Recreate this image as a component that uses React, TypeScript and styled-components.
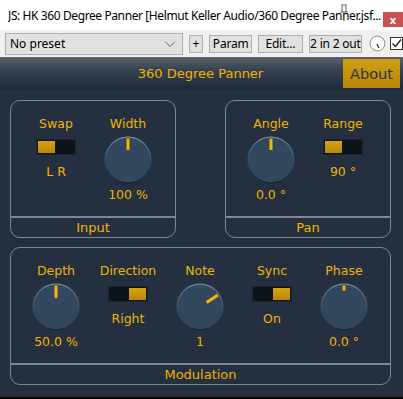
import React from 'react';
import styled, { createGlobalStyle } from 'styled-components';

const GlobalStyle = createGlobalStyle`
  html, body {
    margin: 0;
    padding: 0;
    background: #ffffff;
    overflow: hidden;
  }
`;

const GOLD = '#f2b300';
const PLUGIN_FONT = `'DejaVu Sans', Verdana, sans-serif`;
const WIN_FONT = `'Noto Sans', 'Open Sans', Arial, sans-serif`;

type KnobProps = { angle: number; inner?: number };

const Knob: React.FC<KnobProps> = ({ angle, inner = 10 }) => {
  const rad = (angle * Math.PI) / 180;
  const x1 = 24 + Math.sin(rad) * inner;
  const y1 = 24 - Math.cos(rad) * inner;
  const x2 = 24 + Math.sin(rad) * 21.5;
  const y2 = 24 - Math.cos(rad) * 21.5;
  return (
    <KnobSvg width="48" height="48" viewBox="0 0 48 48">
      <defs>
        <linearGradient id="rim" x1="0" y1="0" x2="0" y2="1">
          <stop offset="0" stopColor="#8596a8" />
          <stop offset="0.5" stopColor="#3b4f66" />
          <stop offset="1" stopColor="#141c26" />
        </linearGradient>
      </defs>
      <circle cx="24" cy="24" r="23.5" fill="url(#rim)" />
      <circle cx="24" cy="24" r="22.5" fill="#33485f" />
      <line x1={x1} y1={y1} x2={x2} y2={y2} stroke="#f5b800" strokeWidth="3" />
    </KnobSvg>
  );
};

const Toggle: React.FC<{ right?: boolean }> = ({ right }) => (
  <ToggleTrack>
    <ToggleThumb $right={right} />
  </ToggleTrack>
);

const KnobControl: React.FC<{ label: string; value: string; angle: number; inner?: number }> = ({ label, value, angle, inner }) => (
  <Control>
    <CtrlLabel>{label}</CtrlLabel>
    <Knob angle={angle} inner={inner} />
    <KnobValue>{value}</KnobValue>
  </Control>
);

const ToggleControl: React.FC<{ label: string; value: string; right?: boolean }> = ({ label, value, right }) => (
  <Control>
    <CtrlLabel>{label}</CtrlLabel>
    <Toggle right={right} />
    <ToggleValue>{value}</ToggleValue>
  </Control>
);

const App: React.FC = () => {
  return (
    <>
      <GlobalStyle />
      <Window>
        <TitleBar>
          <TitleText>JS: HK 360 Degree Panner [Helmut Keller Audio/360 Degree Panner.jsf...</TitleText>
          <Pin width="10" height="18" viewBox="0 0 10 18">
            <path d="M2 1h6M3 1v7M7 1v7M1 8h8M5 8v9" stroke="#666" strokeWidth="1" fill="none" />
          </Pin>
          <CloseButton>x</CloseButton>
        </TitleBar>
        <Toolbar>
          <PresetSelect>
            <span>No preset</span>
            <svg width="12" height="8" viewBox="0 0 12 8">
              <path d="M1 1.5l5 5 5-5" stroke="#666" strokeWidth="1" fill="none" />
            </svg>
          </PresetSelect>
          <ToolButton $w={15}>+</ToolButton>
          <ToolButton $w={43}>Param</ToolButton>
          <ToolButton $w={45}>Edit...</ToolButton>
          <ToolButton $w={54}>2 in 2 out</ToolButton>
          <svg width="17" height="17" viewBox="0 0 17 17" style={{ marginLeft: 2 }}>
            <circle cx="8.5" cy="8.5" r="7.5" fill="#fff" stroke="#888" strokeWidth="1" />
            <path d="M8 9l2 4" stroke="#333" strokeWidth="1.3" />
          </svg>
          <CheckBox>
            <svg width="11" height="11" viewBox="0 0 11 11">
              <path d="M1.5 5.5l3 3 5.5-7" stroke="#222" strokeWidth="1.4" fill="none" />
            </svg>
          </CheckBox>
        </Toolbar>
        <Header>
          <HeaderTitle>360 Degree Panner</HeaderTitle>
          <AboutButton>About</AboutButton>
        </Header>
        <Main>
          <TopRow>
            <Panel $w={166}>
              <Controls>
                <ToggleControl label="Swap" value="L R" />
                <KnobControl label="Width" value="100 %" angle={0} />
              </Controls>
              <PanelFooter>Input</PanelFooter>
            </Panel>
            <Panel $w={166}>
              <Controls>
                <KnobControl label="Angle" value="0.0 °" angle={0} />
                <ToggleControl label="Range" value="90 °" />
              </Controls>
              <PanelFooter>Pan</PanelFooter>
            </Panel>
          </TopRow>
          <Panel $w={381}>
            <Controls>
              <KnobControl label="Depth" value="50.0 %" angle={0} inner={9} />
              <ToggleControl label="Direction" value="Right" right />
              <KnobControl label="Note" value="1" angle={56} inner={8} />
              <ToggleControl label="Sync" value="On" right />
              <KnobControl label="Phase" value="0.0 °" angle={0} inner={16.5} />
            </Controls>
            <PanelFooter>Modulation</PanelFooter>
          </Panel>
        </Main>
        <BottomEdge />
      </Window>
    </>
  );
};

export default App;

const Window = styled.div`
  width: 403px;
  height: 399px;
  display: flex;
  flex-direction: column;
  background: #ffffff;
`;

const TitleBar = styled.div`
  position: relative;
  height: 30px;
  display: flex;
  align-items: center;
  padding-left: 8px;
  background: #ffffff;
`;

const TitleText = styled.div`
  width: 374px;
  overflow: hidden;
  font-family: ${WIN_FONT};
  font-size: 12px;
  color: #000;
  white-space: nowrap;
  letter-spacing: -0.4px;
`;

const Pin = styled.svg`
  position: absolute;
  left: 339px;
  top: 4px;
`;

const CloseButton = styled.div`
  position: absolute;
  right: 0;
  top: 12px;
  width: 20px;
  height: 15px;
  background: #c75050;
  color: #fff;
  font-family: ${WIN_FONT};
  font-size: 11px;
  font-weight: bold;
  display: flex;
  align-items: center;
  justify-content: center;
  line-height: 1;
`;

const Toolbar = styled.div`
  height: 27px;
  background: #f0f0f0;
  display: flex;
  align-items: center;
  padding-left: 5px;
  gap: 5px;
`;

const PresetSelect = styled.div`
  box-sizing: border-box;
  width: 179px;
  height: 22px;
  border: 1px solid #adadad;
  background: #e1e1e1;
  display: flex;
  align-items: center;
  justify-content: space-between;
  padding: 0 6px 0 4px;
  font-family: ${WIN_FONT};
  font-size: 12px;
  color: #000;
`;

const ToolButton = styled.div<{ $w: number }>`
  box-sizing: border-box;
  width: ${({ $w }) => $w}px;
  height: 18px;
  border: 1px solid #adadad;
  background: #e1e1e1;
  display: flex;
  align-items: center;
  justify-content: center;
  font-family: ${WIN_FONT};
  font-size: 12px;
  letter-spacing: -0.2px;
  color: #000;
  white-space: nowrap;
  margin-left: 1px;
`;

const CheckBox = styled.div`
  box-sizing: border-box;
  width: 13px;
  height: 13px;
  border: 1px solid #333;
  background: #fff;
  display: flex;
  align-items: center;
  justify-content: center;
  margin-left: -1px;
`;

const Header = styled.div`
  position: relative;
  height: 33px;
  background: linear-gradient(#59636f 0%, #3a4553 35%, #1d2836 100%);
  display: flex;
  align-items: center;
  justify-content: center;
`;

const HeaderTitle = styled.div`
  font-family: ${PLUGIN_FONT};
  font-size: 13px;
  color: ${GOLD};
  margin-right: 2px;
`;

const AboutButton = styled.div`
  position: absolute;
  right: 3px;
  top: 2px;
  width: 57px;
  height: 29px;
  background: linear-gradient(#d29e12, #b8860a);
  color: #2a3340;
  font-family: ${PLUGIN_FONT};
  font-size: 14.5px;
  display: flex;
  align-items: center;
  justify-content: center;
`;

const Main = styled.div`
  flex: 1;
  background: #243040;
  padding: 10px 12px 0 10px;
  display: flex;
  flex-direction: column;
  gap: 9px;
`;

const TopRow = styled.div`
  display: flex;
  justify-content: space-between;
`;

const Panel = styled.div<{ $w: number }>`
  box-sizing: border-box;
  width: ${({ $w }) => $w}px;
  height: 138px;
  border: 1px solid #80868e;
  border-radius: 10px;
  display: flex;
  flex-direction: column;
`;

const Controls = styled.div`
  flex: 1;
  display: flex;
  padding: 15px 0 0 9px;
`;

const Control = styled.div`
  width: 72px;
  display: flex;
  flex-direction: column;
  align-items: center;
`;

const CtrlLabel = styled.div`
  font-family: ${PLUGIN_FONT};
  font-size: 12.5px;
  line-height: 16px;
  color: ${GOLD};
  margin-bottom: 5px;
  white-space: nowrap;
`;

const KnobSvg = styled.svg`
  display: block;
  margin-top: -1px;
`;

const KnobValue = styled.div`
  font-family: ${PLUGIN_FONT};
  font-size: 12.5px;
  line-height: 16px;
  color: ${GOLD};
  margin-top: 3px;
  white-space: nowrap;
`;

const ToggleValue = styled(KnobValue)`
  margin-top: 9px;
`;

const ToggleTrack = styled.div`
  box-sizing: border-box;
  width: 40px;
  height: 16px;
  margin-top: 2px;
  background: #0d141c;
  border: 1px solid #1c2530;
  display: flex;
  padding: 1px;
`;

const ToggleThumb = styled.div<{ $right?: boolean }>`
  width: 17px;
  height: 12px;
  margin-left: ${({ $right }) => ($right ? 'auto' : '0')};
  background: linear-gradient(#d9a40f, #b8870a);
`;

const PanelFooter = styled.div`
  height: 19px;
  border-top: 2px solid #80868e;
  display: flex;
  align-items: center;
  justify-content: center;
  font-family: ${PLUGIN_FONT};
  font-size: 13px;
  color: ${GOLD};
`;

const BottomEdge = styled.div`
  height: 2px;
  background: #000;
`;
